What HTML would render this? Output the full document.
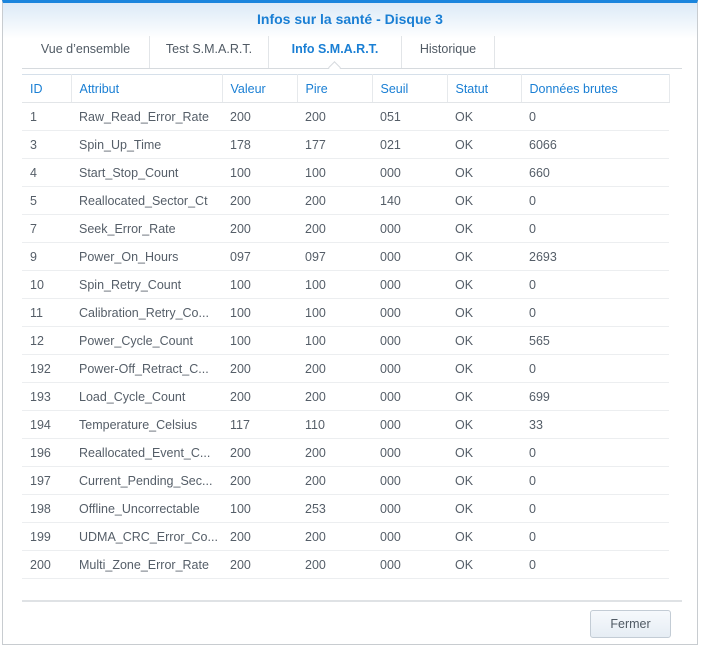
<!DOCTYPE html>
<html><head><meta charset="utf-8"><style>
*{margin:0;padding:0;box-sizing:border-box}
body{width:701px;height:646px;background:#fff;font-family:"Liberation Sans",sans-serif;position:relative;overflow:hidden}
.win{position:absolute;left:2px;top:0;width:696px;height:645px;border:1px solid #c8ccd0;border-top:3px solid #1a85dd;background:#fff}
.hdr{position:absolute;left:0;top:0;right:0;height:36px;background:linear-gradient(#dceaf7,#fff)}
.title{position:absolute;top:8px;left:0;right:0;text-align:center;color:#1a7fd4;font-weight:bold;font-size:14px}
.tabs{position:absolute;left:19px;top:33px;width:660px;height:33px;border-bottom:1px solid #d6dade}
.tab{position:absolute;top:0;height:32px;line-height:26px;font-size:12.5px;color:#505a64;text-align:center;border-right:1px solid #e2e5e8}
.act{color:#1a7fd4;font-weight:bold}
.notch{position:absolute;left:327px;top:60px;width:9px;height:9px;background:#fff;border-left:1px solid #d6dade;border-top:1px solid #d6dade;transform:rotate(45deg)}
table{position:absolute;left:19px;top:71px;width:647px;border-collapse:collapse;font-size:12.5px;color:#555e68;table-layout:fixed}
th{height:28px;color:#1a7fd4;font-weight:normal;text-align:left;padding-left:8px;border-top:1px solid #d6e0ea;border-bottom:1px solid #e2e5e8;border-right:1px solid #e6e9ec}
td{height:28px;padding-left:8px;border-bottom:1px solid #eceef0;white-space:nowrap;overflow:hidden}
.sep{position:absolute;left:19px;top:597px;width:660px;height:2px;background:#dfe2e5}
.btn{position:absolute;left:587px;top:607px;width:81px;height:28px;border:1px solid #c3ccd5;border-radius:3px;background:linear-gradient(#f6f9fc,#e6edf4);font-size:12.5px;color:#505a64;text-align:center;line-height:26px}
</style></head><body>
<div class="win">
<div class="hdr"></div>
<div class="title">Infos sur la santé - Disque 3</div>
<div class="tabs">
<div class="tab" style="left:0;width:128px">Vue d’ensemble</div>
<div class="tab" style="left:128px;width:119px">Test S.M.A.R.T.</div>
<div class="tab act" style="left:247px;width:133px">Info S.M.A.R.T.</div>
<div class="tab" style="left:380px;width:93px">Historique</div>
</div>
<div class="notch"></div>
<table>
<colgroup><col style="width:49px"><col style="width:151px"><col style="width:75px"><col style="width:75px"><col style="width:75px"><col style="width:74px"><col style="width:148px"></colgroup>
<tr><th>ID</th><th>Attribut</th><th>Valeur</th><th>Pire</th><th>Seuil</th><th>Statut</th><th>Données brutes</th></tr>
<tr><td>1</td><td>Raw_Read_Error_Rate</td><td>200</td><td>200</td><td>051</td><td>OK</td><td>0</td></tr>
<tr><td>3</td><td>Spin_Up_Time</td><td>178</td><td>177</td><td>021</td><td>OK</td><td>6066</td></tr>
<tr><td>4</td><td>Start_Stop_Count</td><td>100</td><td>100</td><td>000</td><td>OK</td><td>660</td></tr>
<tr><td>5</td><td>Reallocated_Sector_Ct</td><td>200</td><td>200</td><td>140</td><td>OK</td><td>0</td></tr>
<tr><td>7</td><td>Seek_Error_Rate</td><td>200</td><td>200</td><td>000</td><td>OK</td><td>0</td></tr>
<tr><td>9</td><td>Power_On_Hours</td><td>097</td><td>097</td><td>000</td><td>OK</td><td>2693</td></tr>
<tr><td>10</td><td>Spin_Retry_Count</td><td>100</td><td>100</td><td>000</td><td>OK</td><td>0</td></tr>
<tr><td>11</td><td>Calibration_Retry_Co...</td><td>100</td><td>100</td><td>000</td><td>OK</td><td>0</td></tr>
<tr><td>12</td><td>Power_Cycle_Count</td><td>100</td><td>100</td><td>000</td><td>OK</td><td>565</td></tr>
<tr><td>192</td><td>Power-Off_Retract_C...</td><td>200</td><td>200</td><td>000</td><td>OK</td><td>0</td></tr>
<tr><td>193</td><td>Load_Cycle_Count</td><td>200</td><td>200</td><td>000</td><td>OK</td><td>699</td></tr>
<tr><td>194</td><td>Temperature_Celsius</td><td>117</td><td>110</td><td>000</td><td>OK</td><td>33</td></tr>
<tr><td>196</td><td>Reallocated_Event_C...</td><td>200</td><td>200</td><td>000</td><td>OK</td><td>0</td></tr>
<tr><td>197</td><td>Current_Pending_Sec...</td><td>200</td><td>200</td><td>000</td><td>OK</td><td>0</td></tr>
<tr><td>198</td><td>Offline_Uncorrectable</td><td>100</td><td>253</td><td>000</td><td>OK</td><td>0</td></tr>
<tr><td>199</td><td>UDMA_CRC_Error_Co...</td><td>200</td><td>200</td><td>000</td><td>OK</td><td>0</td></tr>
<tr><td>200</td><td>Multi_Zone_Error_Rate</td><td>200</td><td>200</td><td>000</td><td>OK</td><td>0</td></tr>
</table>
<div class="sep"></div>
<div class="btn">Fermer</div>
</div>
</body></html>
